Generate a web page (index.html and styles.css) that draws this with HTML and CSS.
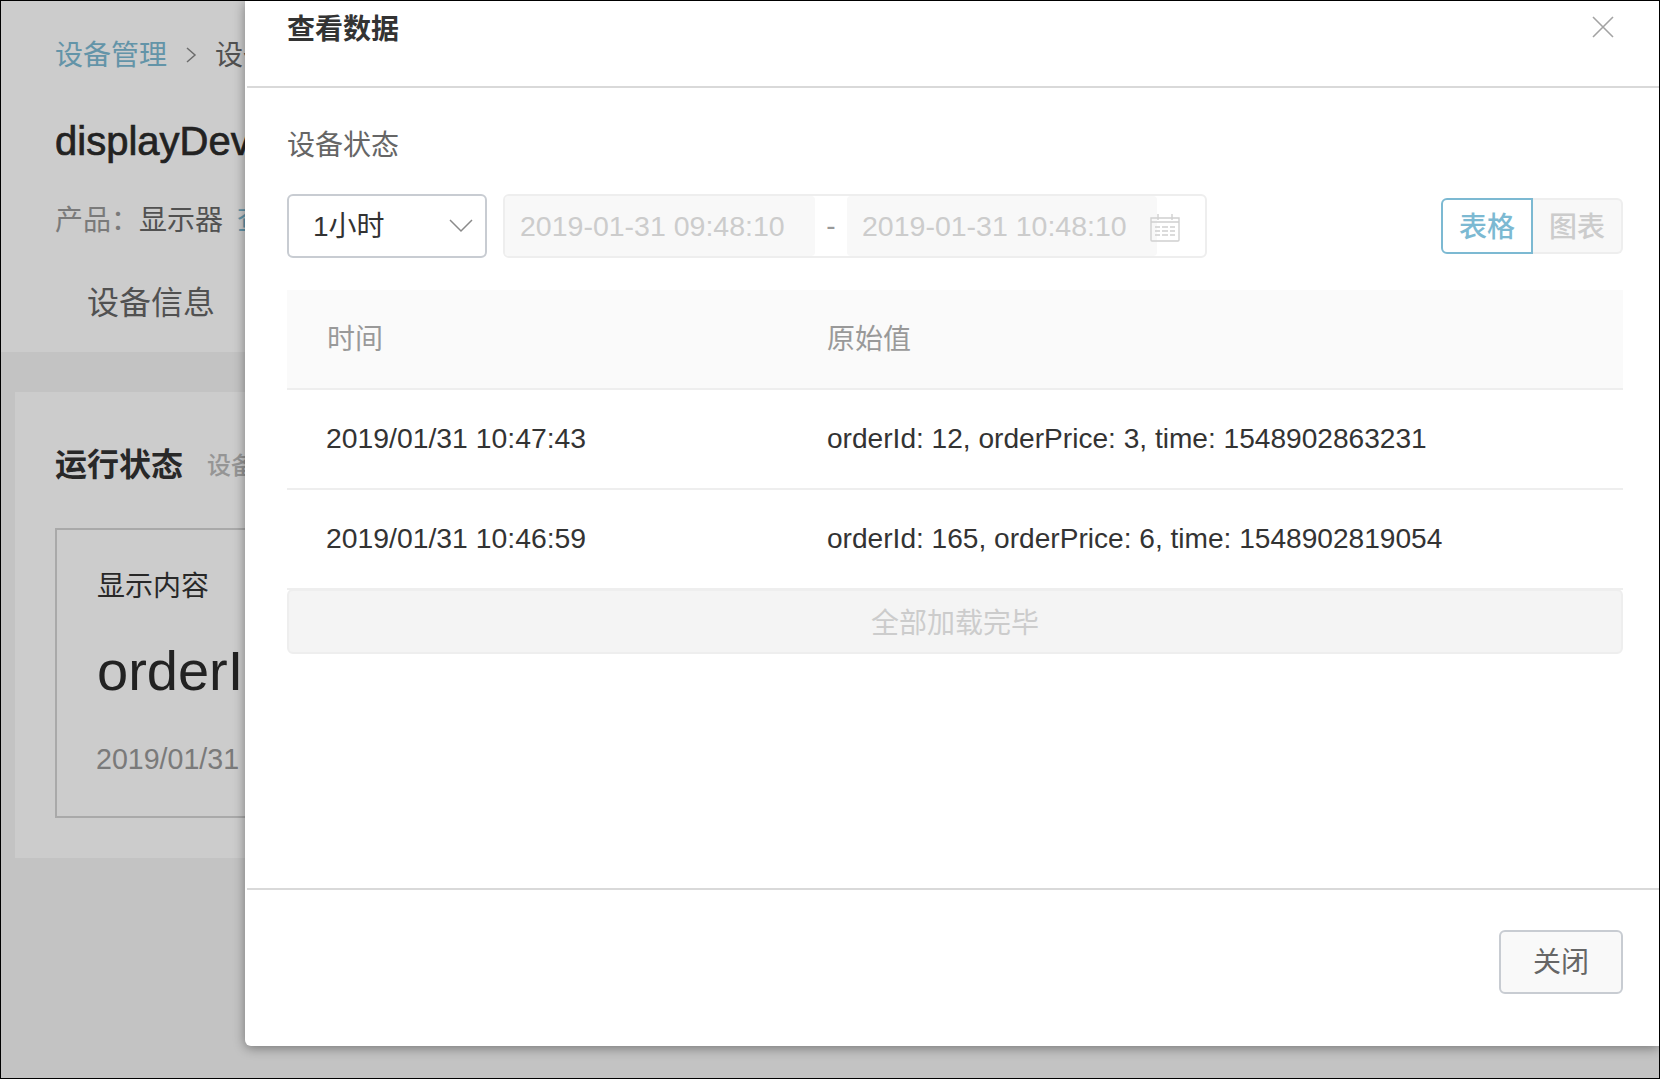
FILE: index.html
```html
<!DOCTYPE html>
<html lang="zh-CN">
<head>
<meta charset="utf-8">
<title>查看数据</title>
<link rel="stylesheet" href="styles.css">
</head>
<body>
<div class="frame">
  <main class="page">
    <header class="page-head">
      <nav class="crumbs"><a class="link">设备管理</a>
        <svg class="crumb-sep" width="12" height="18" viewBox="0 0 12 18"><path d="M2 2l8 7-8 7" fill="none" stroke="#888" stroke-width="1.5"/></svg>
        <span class="crumb-cur">设备详情</span></nav>
      <h1 class="dev-name">displayDevice</h1>
      <div class="dev-meta"><span class="meta-label">产品：</span><span class="meta-value">显示器</span><a class="link meta-link">查看</a></div>
      <div class="tabs"><span class="tab">设备信息</span></div>
    </header>
    <section class="panel">
      <div class="panel-title"><h2>运行状态</h2><span class="panel-sub">设备状态</span></div>
      <div class="stat-card">
        <div class="stat-label">显示内容</div>
        <div class="stat-value">orderId: 12</div>
        <div class="stat-time">2019/01/31 10:47:43</div>
      </div>
    </section>
  </main>
  <div class="mask"></div>
  <aside class="drawer">
    <div class="drawer-head">
      <h3>查看数据</h3>
      <svg class="close" width="22" height="22" viewBox="0 0 22 22"><path d="M1 1l20 20M21 1L1 21" stroke="#a3a3a3" stroke-width="1.6" fill="none"/></svg>
    </div>
    <div class="drawer-body">
      <div class="section-label">设备状态</div>
      <div class="toolbar">
        <div class="select"><span class="select-text">1小时</span>
          <svg width="24" height="14" viewBox="0 0 24 14"><path d="M1 1l11 11L23 1" fill="none" stroke="#8a8a8a" stroke-width="1.5"/></svg>
        </div>
        <div class="range">
          <span class="range-input first">2019-01-31 09:48:10</span>
          <span class="range-dash">-</span>
          <span class="range-input second">2019-01-31 10:48:10</span>
          <svg class="cal" width="30" height="29" viewBox="0 0 30 29"><g fill="none" stroke="#d0d0d0" stroke-width="1.4"><path d="M1 5h28v22a1 1 0 0 1-1 1H2a1 1 0 0 1-1-1z"/><path d="M8 1v6M22 1v6M1 9h28"/><path d="M5 14h5M12 14h6M20 14h5M5 18h5M12 18h6M20 18h5M5 22h5M12 22h6M20 22h5"/></g></svg>
        </div>
        <div class="toggle"><span class="toggle-on">表格</span><span class="toggle-off">图表</span></div>
      </div>
      <div class="table">
        <div class="row row-head"><span class="cell-time">时间</span><span>原始值</span></div>
        <div class="row"><span class="cell-time">2019/01/31 10:47:43</span><span class="cell-value">orderId: 12, orderPrice: 3, time: 1548902863231</span></div>
        <div class="row"><span class="cell-time">2019/01/31 10:46:59</span><span class="cell-value">orderId: 165, orderPrice: 6, time: 1548902819054</span></div>
      </div>
      <div class="load-more">全部加载完毕</div>
    </div>
    <div class="drawer-foot"><span class="btn-close">关闭</span></div>
  </aside>
</div>
</body>
</html>
```
FILE: styles.css
```css
* { box-sizing: border-box; }
html, body { margin: 0; padding: 0; }
body {
  width: 1660px;
  height: 1079px;
  overflow: hidden;
  font-family: "Liberation Sans", "Noto Sans CJK SC", sans-serif;
  font-size: 28px;
  color: #333;
}
.frame {
  position: relative;
  width: 1660px;
  height: 1079px;
  overflow: hidden;
  background: #f4f4f4;
  border: 1px solid #000;
}
.page { display: flex; flex-direction: column; }
.page-head {
  height: 351px;
  background: #fff;
  padding: 34px 0 0 54px;
}
.crumbs { display: flex; align-items: center; height: 36px; white-space: nowrap; }
.link { color: #7cb9d2; }
.crumb-sep { margin: 4px 18px 0 18px; }
.crumb-cur { color: #666; }
.dev-name {
  margin: 42px 0 0;
  font-size: 40px;
  line-height: 56px;
  font-weight: 500;
  color: #2b2b2b;
  -webkit-text-stroke: .7px #2b2b2b;
  white-space: nowrap;
}
.dev-meta { display: flex; margin-top: 32px; line-height: 40px; white-space: nowrap; }
.meta-label { color: #999; width: 84px; }
.meta-value { color: #666; }
.meta-link { margin-left: 14px; }
.tabs { margin-top: 40px; padding-left: 32px; }
.tab { font-size: 32px; line-height: 44px; color: #666; }
.panel {
  margin: 40px 0 0 14px;
  height: 466px;
  background: #fff;
  padding: 51px 0 0 40px;
}
.panel-title { display: flex; align-items: center; height: 44px; white-space: nowrap; }
.panel-title h2 { margin: 0; font-size: 32px; font-weight: 700; color: #333; line-height: 44px; }
.panel-sub { margin: 0 0 4px 24px; font-size: 24px; color: #bbb; font-weight: 500; }
.stat-card {
  margin-top: 41px;
  width: 600px;
  height: 290px;
  border: 2px solid #d4d4d4;
  padding: 37px 0 0 40px;
  white-space: nowrap;
}
.stat-label { line-height: 40px; color: #333; }
.stat-value { margin-top: 32px; font-size: 56px; line-height: 64px; color: #2b2b2b; }
.stat-time { margin-top: 38px; margin-left: -1px; line-height: 36px; font-size: 28.6px; color: #999; }
.mask { position: absolute; inset: 0; background: rgba(0, 0, 0, .2); }
.drawer {
  position: absolute;
  left: 244px;
  top: 0;
  right: 0;
  height: 1045px;
  display: flex;
  flex-direction: column;
  padding-left: 2px;
  background: #fff;
  border-bottom-left-radius: 6px;
  box-shadow: 0 2px 12px rgba(0, 0, 0, .4);
}
.drawer-head {
  position: relative;
  height: 87px;
  flex: none;
  border-bottom: 2px solid #d9d9d9;
  padding: 9px 0 0 40px;
}
.drawer-head h3 { margin: 0; font-size: 28px; line-height: 40px; font-weight: 700; color: #333; }
.close { position: absolute; right: 45px; top: 15px; }
.drawer-body { flex: 1; padding: 38px 36px 0 40px; }
.section-label { line-height: 40px; color: #666; }
.toolbar { display: flex; align-items: center; margin-top: 28px; }
.select {
  width: 200px;
  height: 64px;
  flex: none;
  display: flex;
  align-items: center;
  justify-content: space-between;
  padding: 0 12px 0 24px;
  border: 2px solid #c8ccd2;
  border-radius: 6px;
}
.select-text { margin-bottom: 4px; }
.range {
  position: relative;
  display: flex;
  align-items: center;
  width: 704px;
  height: 64px;
  margin-left: 16px;
  border: 2px solid #eee;
  border-radius: 6px;
  white-space: nowrap;
}
.range-input {
  display: flex;
  align-items: center;
  height: 60px;
  background: #f8f8f8;
  color: #ccc;
  font-size: 28.5px;
}
.range-input.first { width: 310px; padding-left: 15px; border-radius: 4px; }
.range-input.second { width: 310px; padding-left: 15px; border-radius: 4px; }
.range-dash { width: 32px; text-align: center; color: #999; }
.cal { position: absolute; right: 25px; top: 17px; }
.toggle { display: flex; margin-left: auto; height: 56px; }
.toggle-on, .toggle-off {
  display: flex;
  align-items: center;
  justify-content: center;
  width: 92px;
  padding-bottom: 2px;
  border-style: solid;
  border-width: 2px;
}
.toggle-on { border-color: #7cb9d2; color: #7cb9d2; border-radius: 6px 0 0 6px; font-weight: 500; }
.toggle-off { width: 90px; border-color: #eee; border-left: 0; background: #f8f8f8; color: #ccc; border-radius: 0 6px 6px 0; font-weight: 500; }
.table { margin-top: 32px; color: #333; }
.row {
  display: flex;
  align-items: center;
  height: 100px;
  padding-left: 39px;
  border-bottom: 2px solid #eee;
  white-space: nowrap;
}
.row-head { height: 100px; padding: 0 0 4px 40px; background: #fafafa; color: #999; }
.cell-time { width: 501px; flex: none; font-size: 28.35px; padding-bottom: 2px; }
.row-head .cell-time { width: 500px; font-size: 28px; padding-bottom: 0; }
.cell-value { font-size: 28.1px; }
.load-more {
  height: 65px;
  margin-top: -1px;
  padding-bottom: 2px;
  display: flex;
  align-items: center;
  justify-content: center;
  background: #f4f4f4;
  border: 2px solid #eee;
  border-radius: 6px;
  color: #ccc;
}
.drawer-foot {
  flex: none;
  height: 158px;
  display: flex;
  justify-content: flex-end;
  align-items: flex-start;
  border-top: 2px solid #d9d9d9;
  padding: 40px 36px 0 0;
}
.btn-close {
  width: 124px;
  height: 64px;
  padding-bottom: 4px;
  display: flex;
  align-items: center;
  justify-content: center;
  background: #f9f9f9;
  border: 2px solid #c8ccd2;
  border-radius: 6px;
  color: #666;
}
```
